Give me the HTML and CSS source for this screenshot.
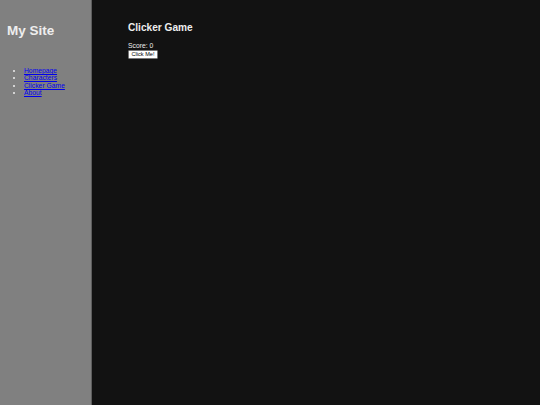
FILE: index.html
```html
<!DOCTYPE html>
<html lang="en">
<head>
<meta charset="utf-8">
<title>Clicker Game</title>
<link rel="stylesheet" href="styles.css">
</head>
<body>
  <aside class="sidebar">
    <h1 class="site-title">My Site</h1>
    <nav class="site-nav">
      <ul class="nav-list">
        <li><a href="#">Homepage</a></li>
        <li><a href="#">Characters</a></li>
        <li><a href="#">Clicker Game</a></li>
        <li><a href="#">About</a></li>
      </ul>
    </nav>
  </aside>
  <main class="content">
    <h2 class="page-title">Clicker Game</h2>
    <p class="score">Score: <span id="score">0</span></p>
    <button class="click-btn" type="button">Click Me!</button>
  </main>
</body>
</html>
```
FILE: styles.css
```css
html, body {
  height: 100%;
}

body {
  margin: 0;
  display: flex;
  min-height: 100vh;
  background: #121212;
  color: #eeeeee;
  font-family: "Liberation Sans", Arial, sans-serif;
  font-size: 6.75px;
}

.sidebar {
  width: 92px;
  flex: none;
  box-sizing: border-box;
  background: #808080;
  border-right: 1px solid #5e5e5e;
  padding: 14px 7px;
}

.site-title {
  margin: 9px 0 0;
  font-size: 13.5px;
  font-weight: bold;
  color: #eeeeee;
}

.site-nav {
  margin-top: 29px;
}

.nav-list {
  margin: 0;
  padding-left: 17px;
  line-height: 7.4px;
}

.nav-list a {
  color: #0000ee;
}

.content {
  flex: 1;
  padding: 13.7px 36px;
}

.page-title {
  margin: 8.4px 0 9.4px;
  font-size: 10.125px;
  font-weight: bold;
}

.score {
  margin: 0;
}

.click-btn {
  margin-top: 0.6px;
  font-family: "Liberation Sans", Arial, sans-serif;
  font-size: 5.6px;
  padding: 0.4px 2.5px;
  border: 0.85px solid #767676;
  border-radius: 1.3px;
  background: #ffffff;
  color: #000000;
}
```
